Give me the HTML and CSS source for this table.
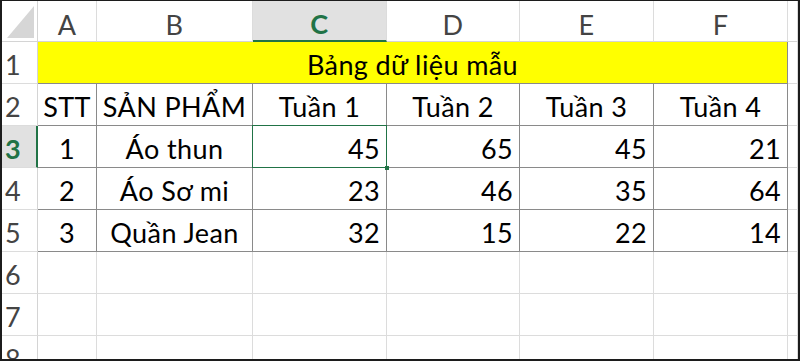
FILE: index.html
```html
<!DOCTYPE html>
<html lang="vi">
<head>
  <meta charset="UTF-8" />
  <meta name="viewport" content="width=device-width, initial-scale=1.0"/>
  <title>Bảng dữ liệu mẫu</title>
  <link rel="stylesheet" href="styles.css">
</head>
<body>
  <div class="sheet">
    <div class="grid">
      <!-- column headers -->
      <div class="corner"></div>
      <div class="col-head">A</div>
      <div class="col-head">B</div>
      <div class="col-head selected">C</div>
      <div class="col-head">D</div>
      <div class="col-head">E</div>
      <div class="col-head">F</div>
      <div class="col-head"></div>

      <!-- row 1: merged title -->
      <div class="row-head">1</div>
      <div class="title">Bảng dữ liệu mẫu</div>
      <div class="cell"></div>

      <!-- row 2: table header -->
      <div class="row-head">2</div>
      <div class="cell tbl center">STT</div>
      <div class="cell tbl center">SẢN PHẨM</div>
      <div class="cell tbl center">Tuần 1</div>
      <div class="cell tbl center">Tuần 2</div>
      <div class="cell tbl center">Tuần 3</div>
      <div class="cell tbl center">Tuần 4</div>
      <div class="cell"></div>

      <div class="row-head selected">3</div>
      <div class="cell tbl center">1</div>
      <div class="cell tbl center">Áo thun</div>
      <div class="cell tbl num active">45</div>
      <div class="cell tbl num">65</div>
      <div class="cell tbl num">45</div>
      <div class="cell tbl num">21</div>
      <div class="cell"></div>

      <div class="row-head">4</div>
      <div class="cell tbl center">2</div>
      <div class="cell tbl center">Áo Sơ mi</div>
      <div class="cell tbl num">23</div>
      <div class="cell tbl num">46</div>
      <div class="cell tbl num">35</div>
      <div class="cell tbl num">64</div>
      <div class="cell"></div>

      <div class="row-head">5</div>
      <div class="cell tbl center">3</div>
      <div class="cell tbl center">Quần Jean</div>
      <div class="cell tbl num">32</div>
      <div class="cell tbl num">15</div>
      <div class="cell tbl num">22</div>
      <div class="cell tbl num">14</div>
      <div class="cell"></div>

      <!-- empty rows -->
      <div class="row-head">6</div>
      <div class="cell"></div><div class="cell"></div><div class="cell"></div><div class="cell"></div>
      <div class="cell"></div><div class="cell"></div><div class="cell"></div>

      <div class="row-head">7</div>
      <div class="cell"></div><div class="cell"></div><div class="cell"></div><div class="cell"></div>
      <div class="cell"></div><div class="cell"></div><div class="cell"></div>

      <div class="row-head">8</div>
      <div class="cell"></div><div class="cell"></div><div class="cell"></div><div class="cell"></div>
      <div class="cell"></div><div class="cell"></div><div class="cell"></div>
    </div>
  </div>
</body>
</html>
```

FILE: styles.css
```css
* {
  box-sizing: border-box;
}

body {
  margin: 0;
  padding: 0;
  background: #fff;
  font-family: 'Lato', 'Open Sans', sans-serif;
}

.sheet {
  width: 800px;
  height: 361px;
  overflow: hidden;
  border: 2px solid #1c1c1c;
  border-top-width: 1px;
}

.grid {
  display: grid;
  grid-template-columns: 36px 59px 156px 134px 133px 134px 134px 1fr;
  grid-template-rows: 41px repeat(8, 42px);
  font-size: 27px;
  letter-spacing: 0.4px;
  line-height: 1;
  color: #000;
}

/* headers */
.corner {
  position: relative;
  border-right: 1px solid #d4d4d4;
  border-bottom: 1px solid #d4d4d4;
}

.corner::after {
  content: '';
  position: absolute;
  left: 5px;
  top: 5px;
  right: 3px;
  bottom: 3px;
  background: #d6d6d6;
  clip-path: polygon(100% 0, 100% 100%, 0 100%);
}

.col-head {
  display: flex;
  align-items: center;
  justify-content: center;
  padding-top: 6px;
  color: #444;
  border-right: 1px solid #dcdcdc;
  border-bottom: 1px solid #d4d4d4;
}

.col-head.selected {
  background: #e1e1e1;
  color: #217346;
  font-weight: 700;
  border-bottom: 2px solid #217346;
}

.row-head {
  display: flex;
  align-items: center;
  padding: 4px 0 0 3px;
  color: #444;
  border-right: 1px solid #d4d4d4;
  border-bottom: 1px solid #dcdcdc;
}

.row-head.selected {
  background: #e1e1e1;
  color: #217346;
  font-weight: 700;
  border-right: 2px solid #217346;
}

/* cells */
.cell {
  display: flex;
  align-items: center;
  padding-top: 4px;
  border-right: 1px solid #dcdcdc;
  border-bottom: 1px solid #dcdcdc;
}

.tbl {
  border-color: #8a8a8a;
}

.center {
  justify-content: center;
}

.num {
  justify-content: flex-end;
  padding-right: 6px;
}

.title {
  grid-column: span 6;
  display: flex;
  align-items: center;
  justify-content: center;
  padding-top: 4px;
  background: #ffff00;
  border-right: 1px solid #8a8a8a;
  border-bottom: 1px solid #8a8a8a;
}

.active {
  position: relative;
}

.active::before {
  content: '';
  position: absolute;
  left: -1px;
  top: -1px;
  right: -1px;
  bottom: -1px;
  border: 1px solid #217346;
}

.active::after {
  content: '';
  position: absolute;
  right: -3px;
  bottom: -3px;
  width: 4px;
  height: 4px;
  background: #217346;
}
```
